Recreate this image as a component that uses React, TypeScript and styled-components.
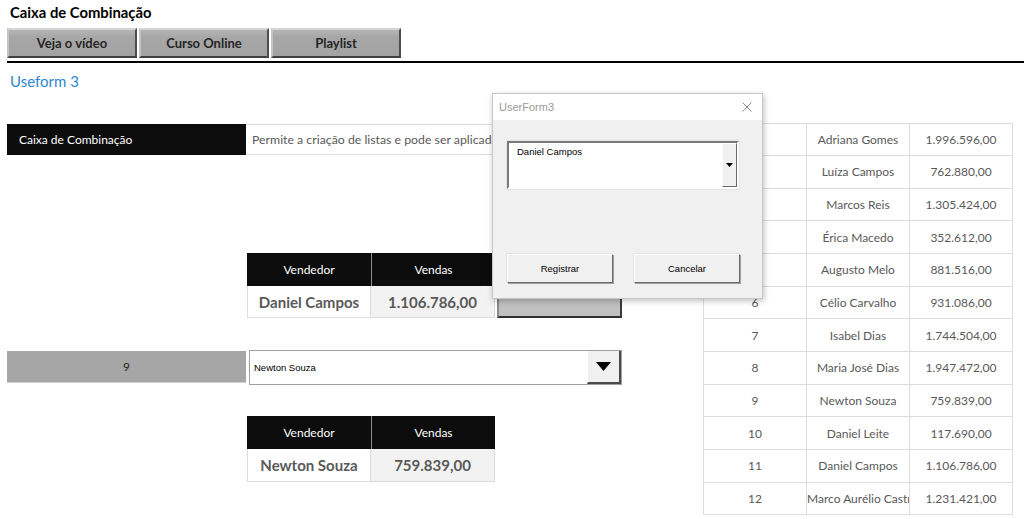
import React from 'react'
import styled, { createGlobalStyle } from 'styled-components'

const ROW = 32.67

const GlobalStyle = createGlobalStyle`
	html, body {
		margin: 0;
		padding: 0;
		background: #fff;
	}
	body {
		font-family: Lato, 'Liberation Sans', sans-serif;
	}
`

const Page = styled.div`
	position: relative;
	width: 1024px;
	height: 519px;
	overflow: hidden;
	background: #fff;
`

const Title = styled.h1`
	margin: 0;
	padding: 2px 0 0 10px;
	height: 26px;
	box-sizing: border-box;
	font-size: 14.8px;
	font-weight: 700;
	line-height: 20px;
	color: #000;
`

const ButtonBar = styled.div`
	display: flex;
	gap: 2px;
	padding-left: 7px;
	height: 30px;
	margin-top: 2px;
`

const NavButton = styled.button`
	width: 130px;
	height: 30px;
	box-sizing: border-box;
	border: 2px solid;
	border-color: #d4d4d4 #4d4d4d #3f3f3f #c4c4c4;
	background: linear-gradient(#b4b4b4, #a6a6a6 30%, #a3a3a3);
	font-family: Lato, 'Liberation Sans', sans-serif;
	font-size: 13px;
	font-weight: 700;
	color: #262626;
	padding: 0;
`

const Rule = styled.div`
	margin: 3px 0 0 7px;
	height: 2px;
	background: #000;
`

const Subtitle = styled.div`
	padding: 8px 0 0 10px;
	font-size: 15px;
	line-height: 20px;
	color: #2e86d1;
`

const Content = styled.div`
	display: flex;
	margin-top: 31.5px;
	padding-left: 7px;
`

const LeftGrid = styled.div`
	width: 696px;
	display: grid;
	grid-template-rows: repeat(12, ${ROW}px);
`

const Line = styled.div<{ $row: number; $span?: number }>`
	grid-row: ${({ $row, $span }) => `${$row} / span ${$span || 1}`};
	display: flex;
	align-items: center;
	min-width: 0;
`

const BlackCell = styled.div`
	width: 239px;
	height: 31px;
	margin-top: 1.5px;
	align-self: stretch;
	box-sizing: border-box;
	background: #0c0c0c;
	color: #fff;
	font-size: 12px;
	display: flex;
	align-items: center;
	padding-left: 12px;
`

const DescCell = styled.div`
	flex: 1;
	height: 31px;
	margin-top: 1.5px;
	align-self: stretch;
	box-sizing: border-box;
	border-top: 1px solid #dcdcdc;
	border-bottom: 1px solid #dcdcdc;
	font-size: 12.3px;
	color: #595959;
	display: flex;
	align-items: center;
	padding-left: 6px;
	white-space: nowrap;
	overflow: hidden;
`

const TableBlock = styled.div`
	margin-left: 240px;
	display: grid;
	grid-template-rows: ${ROW}px ${ROW}px;
`

const TableRow = styled.div`
	display: flex;
`

const HeadCell = styled.div`
	width: 124px;
	box-sizing: border-box;
	background: #0c0c0c;
	color: #fff;
	font-size: 12px;
	display: flex;
	align-items: center;
	justify-content: center;
	& + & {
		border-left: 1px solid #8c8c8c;
	}
`

const DataCell = styled.div<{ $shade?: boolean }>`
	width: 124px;
	box-sizing: border-box;
	background: ${({ $shade }) => ($shade ? '#f2f2f2' : '#fff')};
	border: 1px solid #dcdcdc;
	border-top: none;
	color: #595959;
	font-size: 15px;
	font-weight: 700;
	display: flex;
	align-items: center;
	justify-content: center;
	& + & {
		border-left: none;
	}
`

const GreyButton = styled.div`
	width: 125px;
	margin-left: 2px;
	box-sizing: border-box;
	background: #c0c0c0;
	border: 2px solid;
	border-color: #9a9a9a #3a3a3a #303030 #8a8a8a;
`

const NumCell = styled.div`
	width: 239px;
	height: 32px;
	box-sizing: border-box;
	background: #a6a6a6;
	border-bottom: 1px solid #d0d0d0;
	color: #262626;
	font-size: 12px;
	display: flex;
	align-items: center;
	justify-content: center;
`

const Combo = styled.div`
	width: 373px;
	height: 35px;
	margin-left: 3px;
	box-sizing: border-box;
	border: 1px solid #a0a0a0;
	background: #fff;
	display: flex;
	align-items: stretch;
`

const ComboText = styled.div`
	flex: 1;
	display: flex;
	align-items: center;
	padding-left: 4px;
	font-family: 'Liberation Sans', Arial, sans-serif;
	font-size: 9.5px;
	color: #000;
`

const ComboArrow = styled.div`
	width: 34px;
	box-sizing: border-box;
	background: #f0f0f0;
	border-left: 1px solid #fff;
	border-right: 2px solid #4a4a4a;
	border-bottom: 2px solid #4a4a4a;
	display: flex;
	align-items: center;
	justify-content: center;
`

const SideTable = styled.div`
	width: 309px;
	display: grid;
	grid-template-columns: 103px 103px 103px;
	grid-auto-rows: ${ROW}px;
	border-top: 1px solid #dcdcdc;
	border-left: 1px solid #dcdcdc;
	align-self: flex-start;
`

const SideCell = styled.div`
	border-right: 1px solid #dcdcdc;
	border-bottom: 1px solid #dcdcdc;
	font-size: 12px;
	color: #595959;
	display: flex;
	align-items: center;
	justify-content: safe center;
	white-space: nowrap;
	overflow: hidden;
`

const Dialog = styled.div`
	position: absolute;
	left: 492px;
	top: 93px;
	width: 271px;
	height: 206px;
	box-sizing: border-box;
	border: 1px solid #c8c8c8;
	background: #f0f0f0;
	box-shadow: 1px 2px 6px rgba(0, 0, 0, 0.25);
	display: flex;
	flex-direction: column;
	font-family: 'Liberation Sans', Arial, sans-serif;
`

const DialogBar = styled.div`
	height: 26px;
	background: #fff;
	display: flex;
	align-items: center;
	justify-content: space-between;
	padding: 0 10px 0 6px;
	font-size: 11px;
	color: #9a9a9a;
`

const DialogBody = styled.div`
	flex: 1;
	padding: 21px 0 0 14px;
	display: flex;
	flex-direction: column;
`

const FormCombo = styled.div`
	width: 232px;
	height: 48px;
	box-sizing: border-box;
	background: #fff;
	border: 2px solid;
	border-color: #7a7a7a #fff #fff #7a7a7a;
	outline: 1px solid #e3e3e3;
	display: flex;
`

const FormComboText = styled.div`
	flex: 1;
	padding: 3px 0 0 8px;
	font-size: 9.5px;
	color: #000;
`

const FormComboArrow = styled.div`
	width: 15px;
	box-sizing: border-box;
	background: #f0f0f0;
	border: 1px solid;
	border-color: #fff #6a6a6a #6a6a6a #fff;
	display: flex;
	align-items: center;
	justify-content: center;
`

const FormButtons = styled.div`
	display: flex;
	gap: 21px;
	margin-top: 65px;
`

const FormButton = styled.div`
	width: 106px;
	height: 29px;
	box-sizing: border-box;
	background: #f0f0f0;
	border: 1px solid;
	border-color: #fff #6a6a6a #6a6a6a #fff;
	box-shadow: 1px 1px 0 #a0a0a0, -1px -1px 0 #e3e3e3;
	display: flex;
	align-items: center;
	justify-content: center;
	font-size: 9.5px;
	color: #000;
`

const sideRows: [number, string, string][] = [
	[1, 'Adriana Gomes', '1.996.596,00'],
	[2, 'Luíza Campos', '762.880,00'],
	[3, 'Marcos Reis', '1.305.424,00'],
	[4, 'Érica Macedo', '352.612,00'],
	[5, 'Augusto Melo', '881.516,00'],
	[6, 'Célio Carvalho', '931.086,00'],
	[7, 'Isabel Dias', '1.744.504,00'],
	[8, 'Maria José Dias', '1.947.472,00'],
	[9, 'Newton Souza', '759.839,00'],
	[10, 'Daniel Leite', '117.690,00'],
	[11, 'Daniel Campos', '1.106.786,00'],
	[12, 'Marco Aurélio Castro', '1.231.421,00'],
]

const SalesTable = ({ name, value, withButton }: { name: string; value: string; withButton?: boolean }) => (
	<TableBlock>
		<TableRow>
			<HeadCell>Vendedor</HeadCell>
			<HeadCell>Vendas</HeadCell>
		</TableRow>
		<TableRow>
			<DataCell>{name}</DataCell>
			<DataCell $shade>{value}</DataCell>
			{withButton && <GreyButton />}
		</TableRow>
	</TableBlock>
)

const App = () => (
	<Page>
		<GlobalStyle />
		<Title>Caixa de Combinação</Title>
		<ButtonBar>
			<NavButton>Veja o vídeo</NavButton>
			<NavButton>Curso Online</NavButton>
			<NavButton>Playlist</NavButton>
		</ButtonBar>
		<Rule />
		<Subtitle>Useform 3</Subtitle>

		<Content>
			<LeftGrid>
				<Line $row={1}>
					<BlackCell>Caixa de Combinação</BlackCell>
					<DescCell>Permite a criação de listas e pode ser aplicado diretamente em formulários</DescCell>
				</Line>
				<Line $row={5} $span={2}>
					<SalesTable name="Daniel Campos" value="1.106.786,00" withButton />
				</Line>
				<Line $row={8}>
					<NumCell>9</NumCell>
					<Combo>
						<ComboText>Newton Souza</ComboText>
						<ComboArrow>
							<svg width="15" height="9" viewBox="0 0 15 9">
								<polygon points="0,0 15,0 7.5,9" fill="#000" />
							</svg>
						</ComboArrow>
					</Combo>
				</Line>
				<Line $row={10} $span={2}>
					<SalesTable name="Newton Souza" value="759.839,00" />
				</Line>
			</LeftGrid>

			<SideTable>
				{sideRows.map(([n, name, value]) => (
					<React.Fragment key={n}>
						<SideCell>{n}</SideCell>
						<SideCell>{name}</SideCell>
						<SideCell>{value}</SideCell>
					</React.Fragment>
				))}
			</SideTable>
		</Content>

		<Dialog>
			<DialogBar>
				<span>UserForm3</span>
				<svg width="10" height="10" viewBox="0 0 10 10">
					<path d="M0.5 0.5 L9.5 9.5 M9.5 0.5 L0.5 9.5" stroke="#8a8a8a" strokeWidth="1" />
				</svg>
			</DialogBar>
			<DialogBody>
				<FormCombo>
					<FormComboText>Daniel Campos</FormComboText>
					<FormComboArrow>
						<svg width="7" height="4" viewBox="0 0 7 4">
							<polygon points="0,0 7,0 3.5,4" fill="#000" />
						</svg>
					</FormComboArrow>
				</FormCombo>
				<FormButtons>
					<FormButton>Registrar</FormButton>
					<FormButton>Cancelar</FormButton>
				</FormButtons>
			</DialogBody>
		</Dialog>
	</Page>
)

export default App
